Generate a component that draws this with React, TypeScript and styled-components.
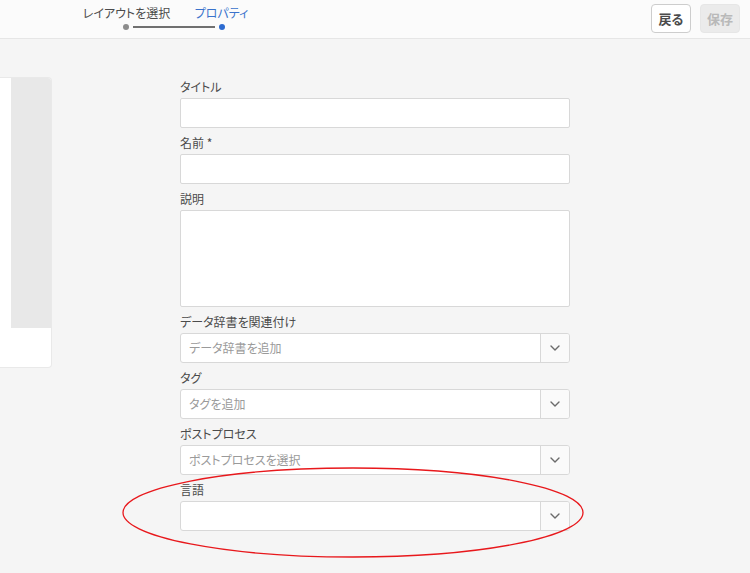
import React from "react";
import styled, { createGlobalStyle } from "styled-components";

const Global = createGlobalStyle`
  html, body { margin: 0; padding: 0; }
  body {
    background: #f5f5f5;
    font-family: "Noto Sans CJK JP", "Noto Sans", "Liberation Sans", sans-serif;
    font-feature-settings: "palt";
    color: #4b4b4b;
    overflow: hidden;
  }
  * { box-sizing: border-box; }
`;

const Page = styled.div`
  position: relative;
  width: 750px;
  height: 573px;
  background: #f5f5f5;
`;

const Header = styled.header`
  height: 39px;
  background: #fbfbfb;
  border-bottom: 1px solid #e6e6e6;
  display: flex;
  align-items: flex-start;
  justify-content: space-between;
  padding: 0 10px 0 79px;
`;

const Steps = styled.div`
  display: grid;
  grid-template-columns: 95px 95px;
  padding-top: 5px;
`;

const StepLabel = styled.div<{ $active?: boolean }>`
  font-size: 12px;
  line-height: 16px;
  text-align: center;
  white-space: nowrap;
  color: ${(p) => (p.$active ? "#3a73cc" : "#4b4b4b")};
`;

const Track = styled.div`
  grid-column: 1 / span 2;
  display: flex;
  align-items: center;
  gap: 4px;
  padding: 0 44px;
  margin-top: 3px;
`;

const Dot = styled.span<{ $active?: boolean }>`
  width: 6px;
  height: 6px;
  border-radius: 50%;
  background: ${(p) => (p.$active ? "#2d6bd0" : "#8c8c8c")};
  flex: none;
`;

const Line = styled.span`
  flex: 1;
  height: 2px;
  background: #707070;
`;

const Actions = styled.div`
  display: flex;
  gap: 9px;
  padding-top: 4px;
`;

const Button = styled.button<{ $disabled?: boolean }>`
  width: 40px;
  height: 29px;
  padding: 0;
  border-radius: 4px;
  font-family: inherit;
  font-feature-settings: "palt";
  font-size: 13px;
  font-weight: 700;
  border: 1px solid ${(p) => (p.$disabled ? "#e6e6e6" : "#cdcdcd")};
  background: ${(p) => (p.$disabled ? "#ebebeb" : "#ffffff")};
  color: ${(p) => (p.$disabled ? "#b9b9b9" : "#4b4b4b")};
`;

const Body = styled.main`
  display: flex;
  align-items: flex-start;
`;

const PreviewCard = styled.div`
  margin-top: 38px;
  width: 52px;
  height: 291px;
  background: #ffffff;
  border: 1px solid #e9e9e9;
  border-left: none;
  border-radius: 0 4px 4px 0;
  display: flex;
  flex-direction: column;
  overflow: hidden;
`;

const PreviewTop = styled.div`
  height: 250px;
  display: flex;
`;

const PreviewGap = styled.div`
  width: 11px;
  background: #ffffff;
`;

const PreviewImage = styled.div`
  flex: 1;
  background: #e8e8e8;
`;

const Form = styled.form`
  margin-left: 128px;
  margin-top: 33px;
  width: 390px;
  display: flex;
  flex-direction: column;
`;

const Label = styled.label`
  display: block;
  font-size: 12px;
  line-height: 14px;
  padding: 8px 0 4px;
  color: #4b4b4b;
  white-space: nowrap;
`;

const TextInput = styled.input`
  display: block;
  width: 390px;
  height: 30px;
  border: 1px solid #d8d8d8;
  border-radius: 2px;
  background: #ffffff;
  outline: none;
  margin: 0;
`;

const TextArea = styled.textarea`
  display: block;
  width: 390px;
  height: 97px;
  border: 1px solid #d8d8d8;
  border-radius: 2px;
  background: #ffffff;
  resize: none;
  outline: none;
  margin: 0;
`;

const Select = styled.div`
  display: flex;
  width: 390px;
  height: 30px;
  border: 1px solid #d8d8d8;
  border-radius: 3px;
  background: #ffffff;
  overflow: hidden;
`;

const SelectValue = styled.div`
  flex: 1;
  font-size: 12px;
  line-height: 28px;
  padding-left: 8px;
  color: #9a9a9a;
  white-space: nowrap;
`;

const SelectButton = styled.div`
  width: 29px;
  border-left: 1px solid #d8d8d8;
  background: #fafafa;
  display: flex;
  align-items: center;
  justify-content: center;
`;

const Annotation = styled.svg`
  position: absolute;
  left: 0;
  top: 0;
  pointer-events: none;
`;

const Chevron = () => (
  <svg width="10" height="6" viewBox="0 0 10 6">
    <polyline points="1,1 5,5 9,1" fill="none" stroke="#6b6b6b" strokeWidth="1.4" strokeLinecap="round" strokeLinejoin="round" />
  </svg>
);

const SelectField = ({ placeholder }: { placeholder?: string }) => (
  <Select>
    <SelectValue>{placeholder}</SelectValue>
    <SelectButton>
      <Chevron />
    </SelectButton>
  </Select>
);

export default function App() {
  return (
    <Page>
      <Global />
      <Header>
        <Steps>
          <StepLabel>レイアウトを選択</StepLabel>
          <StepLabel $active>プロパティ</StepLabel>
          <Track>
            <Dot />
            <Line />
            <Dot $active />
          </Track>
        </Steps>
        <Actions>
          <Button type="button">戻る</Button>
          <Button type="button" $disabled>保存</Button>
        </Actions>
      </Header>
      <Body>
        <PreviewCard>
          <PreviewTop>
            <PreviewGap />
            <PreviewImage />
          </PreviewTop>
        </PreviewCard>
        <Form>
          <Label>タイトル</Label>
          <TextInput />
          <Label>名前 *</Label>
          <TextInput />
          <Label>説明</Label>
          <TextArea />
          <Label>データ辞書を関連付け</Label>
          <SelectField placeholder="データ辞書を追加" />
          <Label>タグ</Label>
          <SelectField placeholder="タグを追加" />
          <Label>ポストプロセス</Label>
          <SelectField placeholder="ポストプロセスを選択" />
          <Label>言語</Label>
          <SelectField />
        </Form>
      </Body>
      <Annotation width="750" height="573" viewBox="0 0 750 573">
        <ellipse cx="353" cy="512.5" rx="230" ry="44.5" fill="none" stroke="#e8181c" strokeWidth="1.3" />
      </Annotation>
    </Page>
  );
}
